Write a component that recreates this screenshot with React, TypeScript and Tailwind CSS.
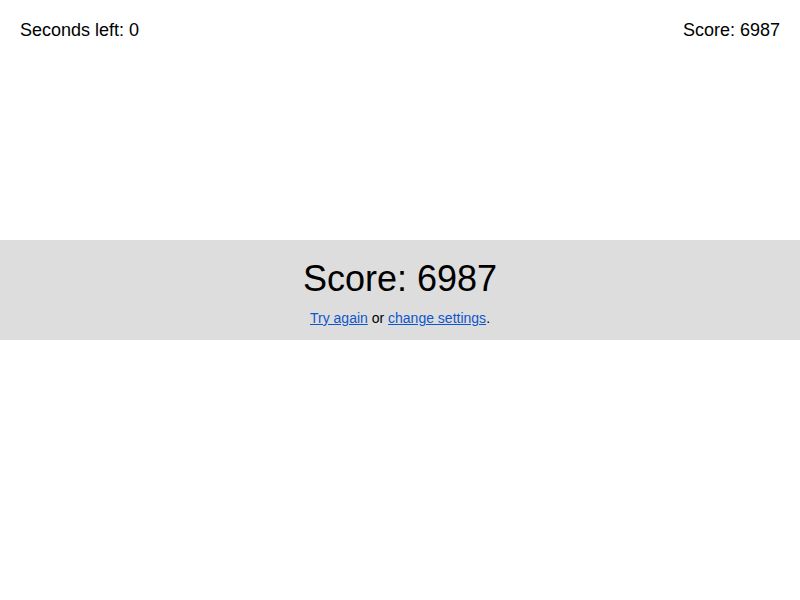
export default function App() {
    const seconds = 0;
    const score = 6987;

    return (
        <div className="w-[800px] h-[600px] bg-white text-black font-['Liberation_Sans',Arial,sans-serif]">
            {/* Top bar */}
            <div className="flex justify-between items-start px-5 pt-5 text-[18px] leading-[21px]">
                <span>Seconds left: {seconds}</span>
                <span>Score: {score}</span>
            </div>

            {/* Result band */}
            <div className="mt-[199px] h-[100px] bg-[#dddddd] flex flex-col items-center pt-[18px]">
                <div className="text-[36px] leading-[41px]">Score: {score}</div>
                <div className="mt-[11px] text-[14px] leading-[16px]">
                    <a href="#" className="text-[#1155cc] underline">Try again</a>
                    {" "}or{" "}
                    <a href="#" className="text-[#1155cc] underline">change settings</a>.
                </div>
            </div>
        </div>
    );
}
